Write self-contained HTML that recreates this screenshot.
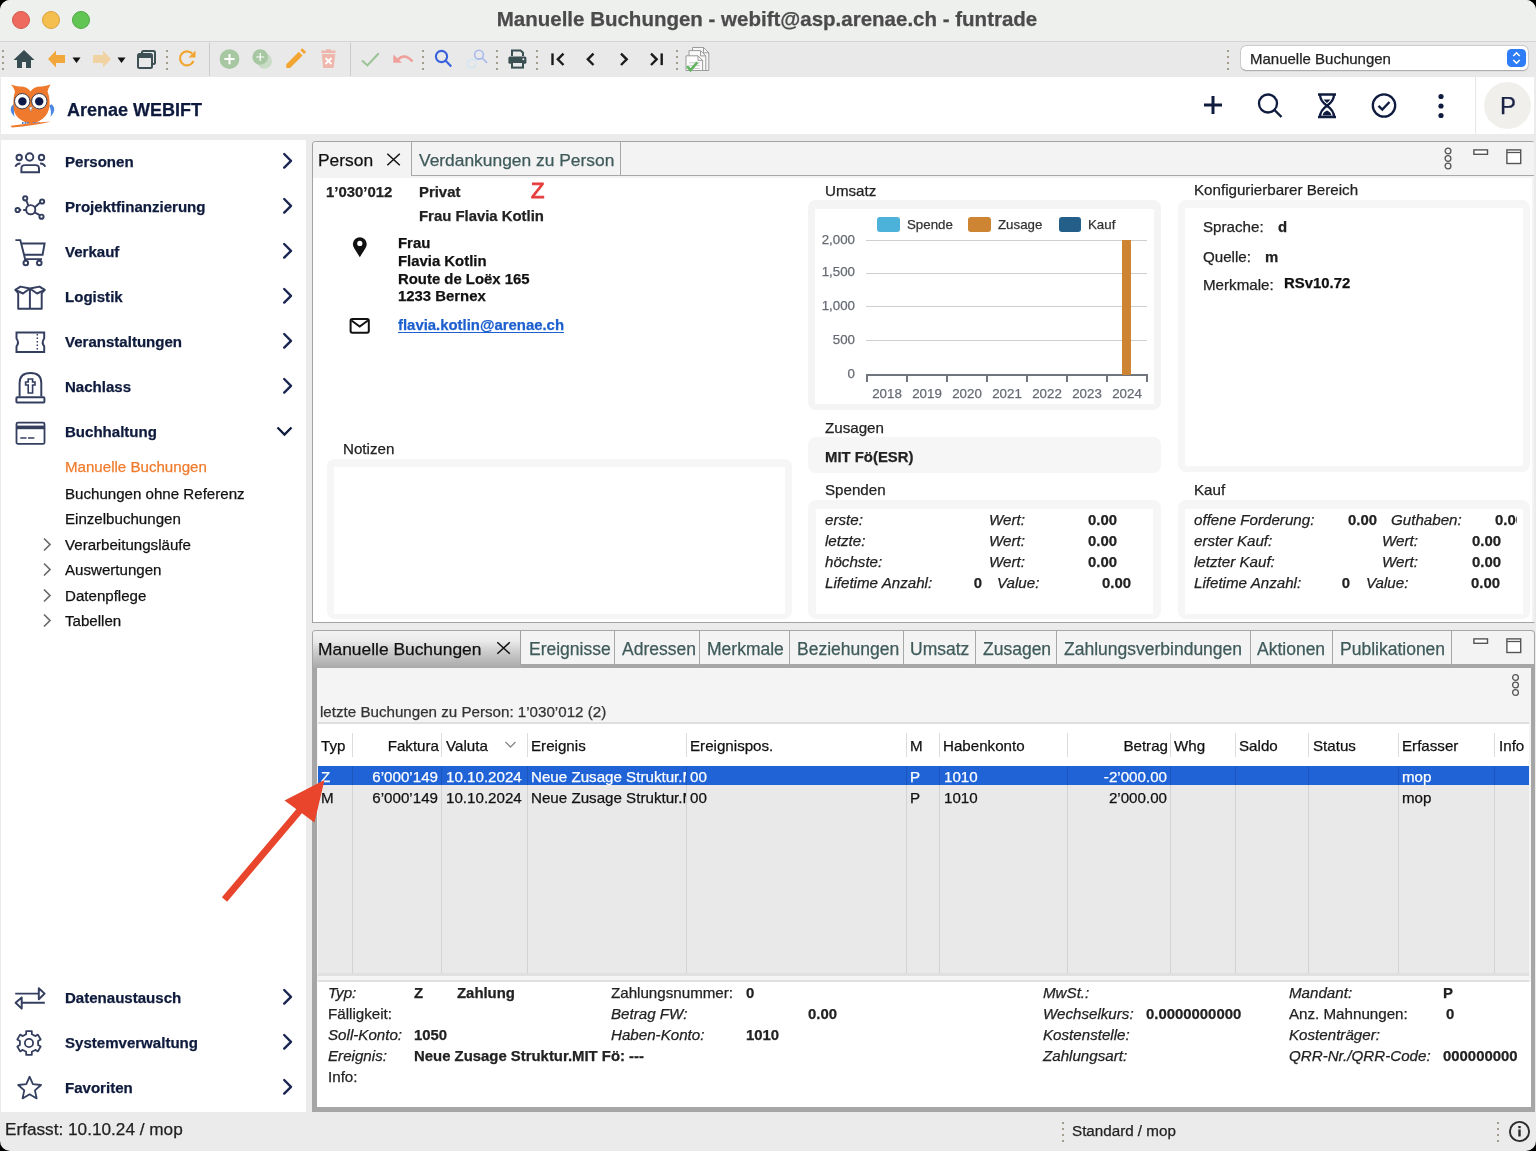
<!DOCTYPE html>
<html><head><meta charset="utf-8"><title>Manuelle Buchungen</title>
<style>
html,body{margin:0;padding:0;}
body{width:1536px;height:1151px;overflow:hidden;background:#000;position:relative;font-family:"Liberation Sans",sans-serif;}
.win{position:absolute;left:0;top:0;width:1536px;height:1151px;border-radius:10px;background:#ebebeb;overflow:hidden;}
.t{position:absolute;white-space:nowrap;line-height:1;-webkit-text-stroke:0.25px currentColor;will-change:transform;}
.r{position:absolute;}
</style></head><body><div class="win">

<div class="r" style="left:0px;top:0px;width:1536px;height:41px;background:#eef0ee;"></div>
<div class="r" style="left:0px;top:41px;width:1536px;height:1px;background:#d4d4d4;"></div>
<div class="r" style="left:12px;top:11px;width:18px;height:18px;background:#ee6a5e;border-radius:50%;box-sizing:border-box;border:0.6px solid #d5574b;"></div>
<div class="r" style="left:42px;top:11px;width:18px;height:18px;background:#f5bf4f;border-radius:50%;box-sizing:border-box;border:0.6px solid #d9a23c;"></div>
<div class="r" style="left:72px;top:11px;width:18px;height:18px;background:#61c554;border-radius:50%;box-sizing:border-box;border:0.6px solid #4fa842;"></div>
<div class="t" style="left:467.0px;width:600px;text-align:center;top:9.00px;font-size:20.5px;font-weight:700;color:#4b4b4b;">Manuelle Buchungen - webift@asp.arenae.ch - funtrade</div>
<div class="r" style="left:0px;top:42px;width:1536px;height:35px;background:#e9e9e9;"></div>
<div class="r" style="left:2px;top:50px;width:2px;height:2px;background:#a39d8c;"></div>
<div class="r" style="left:2px;top:56px;width:2px;height:2px;background:#a39d8c;"></div>
<div class="r" style="left:2px;top:62px;width:2px;height:2px;background:#a39d8c;"></div>
<div class="r" style="left:2px;top:68px;width:2px;height:2px;background:#a39d8c;"></div>
<svg class="r" style="left:13px;top:49px;" width="22" height="20" viewBox="0 0 22 20"><path d="M11 1 L21.5 11 L18 11 L18 19 L13 19 L13 13 L9 13 L9 19 L4 19 L4 11 L0.5 11 Z" fill="#384d51"/></svg>
<svg class="r" style="left:47px;top:50px;" width="20" height="18" viewBox="0 0 20 18"><path d="M1 9 L9 0.5 L9 5 L18 5 L18 13 L9 13 L9 17.5 Z" fill="#f2a73a"/></svg>
<svg class="r" style="left:72px;top:57px;" width="10" height="7" viewBox="0 0 10 7"><path d="M0.5 0.5 L8.5 0.5 L4.5 6 Z" fill="#111"/></svg>
<svg class="r" style="left:92px;top:50px;" width="20" height="18" viewBox="0 0 20 18"><path d="M19 9 L11 0.5 L11 5 L1 5 L1 13 L11 13 L11 17.5 Z" fill="#f1d2a2"/></svg>
<svg class="r" style="left:117px;top:57px;" width="10" height="7" viewBox="0 0 10 7"><path d="M0.5 0.5 L8.5 0.5 L4.5 6 Z" fill="#111"/></svg>
<svg class="r" style="left:136px;top:49px;" width="22" height="21" viewBox="0 0 22 21"><rect x="6" y="2" width="13" height="13" rx="1.5" fill="none" stroke="#3d5154" stroke-width="2"/><rect x="2" y="5" width="14" height="14" rx="1.5" fill="#e9e9e9" stroke="#3d5154" stroke-width="2"/><rect x="2" y="5" width="14" height="4" fill="#3d5154"/></svg>
<div class="r" style="left:166px;top:50px;width:2px;height:2px;background:#a39d8c;"></div>
<div class="r" style="left:166px;top:56px;width:2px;height:2px;background:#a39d8c;"></div>
<div class="r" style="left:166px;top:62px;width:2px;height:2px;background:#a39d8c;"></div>
<div class="r" style="left:166px;top:68px;width:2px;height:2px;background:#a39d8c;"></div>
<svg class="r" style="left:178px;top:49px;" width="20" height="20" viewBox="0 0 20 20"><path d="M15.5 12 A7 7 0 1 1 14.2 4.6" fill="none" stroke="#f2a531" stroke-width="2.2"/><path d="M17.5 1.5 L17.5 8.5 L10.5 8.5 Z" fill="#f2a531"/></svg>
<div class="r" style="left:209px;top:43px;width:1px;height:33px;background:#cbcbcb;"></div>
<svg class="r" style="left:219px;top:49px;" width="22" height="22" viewBox="0 0 22 22"><circle cx="10.5" cy="10.1" r="9.9" fill="#a7c7a2"/><path d="M10.5 5 V15.2 M5.4 10.1 H15.6" stroke="#fff" stroke-width="2"/></svg>
<svg class="r" style="left:250px;top:47px;" width="24" height="24" viewBox="0 0 24 24"><circle cx="14.4" cy="14.2" r="7.6" fill="#c9dcc6"/><circle cx="10.2" cy="10" r="7.8" fill="#a7c7a2"/><path d="M10.2 6 V14 M6.2 10 H14.2" stroke="#fff" stroke-width="1.2"/></svg>
<svg class="r" style="left:284px;top:48px;" width="24" height="22" viewBox="0 0 24 22"><path d="M2.3 20 L2.3 16.2 L14.8 3.7 L18.6 7.5 L6.1 20 Z" fill="#f2a531"/><path d="M16.3 2.2 L18.3 0.2 L22.1 4 L20.1 6 Z" fill="#f2a531"/></svg>
<svg class="r" style="left:320px;top:49px;" width="17" height="20" viewBox="0 0 17 20"><path d="M1.4 1.5 L15.5 1.5 L15.5 4 L1.4 4 Z" fill="#efb6ac"/><rect x="6" y="0.3" width="5" height="2" rx="0.8" fill="#efb6ac"/><path d="M1.8 5 L15.3 5 L13.6 19 L3.2 19 Z" fill="#efb6ac"/><path d="M5.5 9 L11.5 15 M11.5 9 L5.5 15" stroke="#fff" stroke-width="1.8"/></svg>
<div class="r" style="left:350px;top:43px;width:1px;height:33px;background:#cbcbcb;"></div>
<svg class="r" style="left:359px;top:50px;" width="22" height="18" viewBox="0 0 22 18"><path d="M3 10.4 L8.4 15.4 L19.8 3.3" fill="none" stroke="#98c393" stroke-width="2"/></svg>
<svg class="r" style="left:392px;top:52px;" width="24" height="14" viewBox="0 0 24 14"><path d="M6 7.5 Q12.5 0.5 20.5 9.5" fill="none" stroke="#efa09a" stroke-width="2.6"/><path d="M1.3 2.5 L1.3 10.8 L10 10.8 Z" fill="#efa09a"/></svg>
<div class="r" style="left:422px;top:50px;width:2px;height:2px;background:#a39d8c;"></div>
<div class="r" style="left:422px;top:56px;width:2px;height:2px;background:#a39d8c;"></div>
<div class="r" style="left:422px;top:62px;width:2px;height:2px;background:#a39d8c;"></div>
<div class="r" style="left:422px;top:68px;width:2px;height:2px;background:#a39d8c;"></div>
<svg class="r" style="left:434px;top:48px;" width="20" height="21" viewBox="0 0 20 21"><circle cx="7.5" cy="8.5" r="5.6" fill="none" stroke="#3a62dc" stroke-width="2.1"/><path d="M11.5 12.5 L17.2 18.4" stroke="#3a62dc" stroke-width="2.2"/></svg>
<svg class="r" style="left:465px;top:48px;" width="25" height="23" viewBox="0 0 25 23"><circle cx="14" cy="6.7" r="4.4" fill="none" stroke="#a9b9ea" stroke-width="1.6"/><path d="M17.2 10 L22 14.8" stroke="#a9b9ea" stroke-width="1.7"/><path d="M11 15.5 A4.3 4.3 0 1 1 9.5 12.3" fill="none" stroke="#d1e5f1" stroke-width="1.4"/><path d="M11.5 11 L11.5 14 L8.5 12.5 Z" fill="#d1e5f1"/></svg>
<div class="r" style="left:496px;top:50px;width:2px;height:2px;background:#a39d8c;"></div>
<div class="r" style="left:496px;top:56px;width:2px;height:2px;background:#a39d8c;"></div>
<div class="r" style="left:496px;top:62px;width:2px;height:2px;background:#a39d8c;"></div>
<div class="r" style="left:496px;top:68px;width:2px;height:2px;background:#a39d8c;"></div>
<svg class="r" style="left:507px;top:49px;" width="21" height="20" viewBox="0 0 21 20"><path d="M5 7 V1.4 H13.5 L16 3.8 V7" fill="none" stroke="#3a4f52" stroke-width="2"/><rect x="1.4" y="7.5" width="18" height="7.3" rx="1.6" fill="#3a4f52"/><rect x="5" y="13" width="11" height="5.6" fill="#e9e9e9" stroke="#3a4f52" stroke-width="2"/><circle cx="16.3" cy="10.3" r="1" fill="#e9e9e9"/></svg>
<div class="r" style="left:536px;top:50px;width:2px;height:2px;background:#a39d8c;"></div>
<div class="r" style="left:536px;top:56px;width:2px;height:2px;background:#a39d8c;"></div>
<div class="r" style="left:536px;top:62px;width:2px;height:2px;background:#a39d8c;"></div>
<div class="r" style="left:536px;top:68px;width:2px;height:2px;background:#a39d8c;"></div>
<svg class="r" style="left:549px;top:51px;" width="18" height="17" viewBox="0 0 18 17"><path d="M3.5 2.4 V14.1" stroke="#1b1b1b" stroke-width="2.4"/><path d="M14.5 2.6 L8.8 8.3 L14.5 14" fill="none" stroke="#1b1b1b" stroke-width="2.4"/></svg>
<svg class="r" style="left:584px;top:51px;" width="12" height="17" viewBox="0 0 12 17"><path d="M9.5 2.6 L3.8 8.3 L9.5 14" fill="none" stroke="#1b1b1b" stroke-width="2.4"/></svg>
<svg class="r" style="left:618px;top:51px;" width="12" height="17" viewBox="0 0 12 17"><path d="M3 2.6 L8.7 8.3 L3 14" fill="none" stroke="#1b1b1b" stroke-width="2.4"/></svg>
<svg class="r" style="left:648px;top:51px;" width="18" height="17" viewBox="0 0 18 17"><path d="M3 2.6 L8.7 8.3 L3 14" fill="none" stroke="#1b1b1b" stroke-width="2.4"/><path d="M13.7 2.4 V14.1" stroke="#1b1b1b" stroke-width="2.4"/></svg>
<div class="r" style="left:676px;top:50px;width:2px;height:2px;background:#a39d8c;"></div>
<div class="r" style="left:676px;top:56px;width:2px;height:2px;background:#a39d8c;"></div>
<div class="r" style="left:676px;top:62px;width:2px;height:2px;background:#a39d8c;"></div>
<div class="r" style="left:676px;top:68px;width:2px;height:2px;background:#a39d8c;"></div>
<svg class="r" style="left:680px;top:44px;" width="36" height="30" viewBox="0 0 36 30"><path d="M12.5 3.5 H23.5 L28.8 8.8 V26.5 H12.5 Z" fill="#f7f7f7" stroke="#9a9a9a" stroke-width="1"/><path d="M23.5 3.5 V8.8 H28.8" fill="none" stroke="#9a9a9a" stroke-width="1"/><path d="M9 6.6 H20.5 L25.8 11.9 V26.5 H9 Z" fill="#f9f9f9" stroke="#9a9a9a" stroke-width="1"/><path d="M20.5 6.6 V11.9 H25.8" fill="none" stroke="#9a9a9a" stroke-width="1"/><path d="M6 11.8 H18 L22.6 16.4 V26.5 H6 Z" fill="#fcfcfc" stroke="#9a9a9a" stroke-width="1"/><path d="M18 11.8 V16.4 H22.6" fill="none" stroke="#9a9a9a" stroke-width="1"/><path d="M9 18.8 H20 M9 21.6 H20 M9 24.4 H20" stroke="#c4c4c4" stroke-width="0.9"/><path d="M7 22.2 L10.5 26.2 L17.3 18.4" fill="none" stroke="#62b662" stroke-width="2.6"/></svg>
<div class="r" style="left:1227px;top:50px;width:2px;height:2px;background:#a39d8c;"></div>
<div class="r" style="left:1227px;top:56px;width:2px;height:2px;background:#a39d8c;"></div>
<div class="r" style="left:1227px;top:62px;width:2px;height:2px;background:#a39d8c;"></div>
<div class="r" style="left:1227px;top:68px;width:2px;height:2px;background:#a39d8c;"></div>
<div class="r" style="left:1241px;top:46px;width:287px;height:24px;background:#fff;border-radius:5px;box-shadow:0 0 0 0.5px rgba(0,0,0,0.18),0 0.5px 1.5px rgba(0,0,0,0.22);"></div>
<div class="t" style="left:1250.0px;top:51.00px;font-size:15.0px;font-weight:400;color:#222;">Manuelle Buchungen</div>
<svg class="r" style="left:1507px;top:49px;" width="19" height="18" viewBox="0 0 19 18"><rect x="0" y="0" width="19" height="18" rx="4.5" fill="#2e7cf6"/><path d="M6.3 7 L9.5 3.8 L12.7 7 M6.3 11 L9.5 14.2 L12.7 11" fill="none" stroke="#fff" stroke-width="1.6"/></svg>
<div class="r" style="left:1px;top:77px;width:1533px;height:57px;background:#fff;"></div>
<svg class="r" style="left:5px;top:80px;" width="55" height="52" viewBox="0 0 55 52"><path d="M8.2 24.2 Q2.5 29.5 9.5 37 Q8 30.5 11 25.5 Z" fill="#4c87e6"/><path d="M46.8 24.2 Q52.5 29.5 45.5 37 Q47 30.5 44 25.5 Z" fill="#4c87e6"/><path d="M6 4.5 Q10 6 14 6.5 Q22 6 25.5 11.5 Q29 6 37 6.5 Q41 6 45.5 4.5 Q43 9 42.5 11.5 Q45 17 44.5 26 Q44 33 38 38.5 Q31 43.5 26 44 Q21 43.5 14 38.5 Q8 33 8.5 26 Q8 17 10 11.5 Q9 8 6 4.5 Z" fill="#ef7a2e"/><circle cx="17.2" cy="21.2" r="7.7" fill="#fff" stroke="#2a2f45" stroke-width="0.9"/><circle cx="34.3" cy="21.2" r="7.7" fill="#fff" stroke="#2a2f45" stroke-width="0.9"/><circle cx="17.4" cy="21.4" r="4.2" fill="#0c1948"/><circle cx="34.2" cy="21.4" r="4.2" fill="#0c1948"/><path d="M24 27 L27.6 27 L25.8 31.5 Z" fill="#f4f4f4" stroke="#7a7f90" stroke-width="0.5"/><path d="M17 43 H24.5 M28 43 H36" stroke="#4c87e6" stroke-width="1.8" stroke-dasharray="1.6 1"/><path d="M5.5 45.8 Q20 43.5 46 41.5 Q30 45.5 7 47.5 Z" fill="#ef7a2e"/></svg>
<div class="t" style="left:67.0px;top:101.00px;font-size:18px;font-weight:700;color:#0e1a3c;">Arenae WEBIFT</div>
<svg class="r" style="left:1202px;top:94px;" width="22" height="22" viewBox="0 0 22 22"><path d="M11 2 V20 M2 11 H20" stroke="#101c3f" stroke-width="3"/></svg>
<svg class="r" style="left:1256px;top:92px;" width="28" height="28" viewBox="0 0 28 28"><circle cx="12" cy="11.5" r="9" fill="none" stroke="#101c3f" stroke-width="2.3"/><path d="M18.5 18 L25.5 25" stroke="#101c3f" stroke-width="2.4"/></svg>
<svg class="r" style="left:1315px;top:92px;" width="24" height="28" viewBox="0 0 24 28"><path d="M3 2.5 H21 M3 25 H21" stroke="#101c3f" stroke-width="2.6"/><path d="M5 2.5 Q5 9 12 13.75 Q19 9 19 2.5 M5 25 Q5 18.5 12 13.75 Q19 18.5 19 25" fill="none" stroke="#101c3f" stroke-width="2.3"/><path d="M8.5 7.5 H15.5 L12 11 Z M7.5 23.5 Q8 20 12 18.5 Q16 20 16.5 23.5 Z" fill="#101c3f"/></svg>
<svg class="r" style="left:1370px;top:91px;" width="28" height="29" viewBox="0 0 28 29"><circle cx="14" cy="14.5" r="11.2" fill="none" stroke="#101c3f" stroke-width="2.3"/><path d="M8.5 14.8 L12.3 18.5 L19.5 11" fill="none" stroke="#101c3f" stroke-width="2.4"/></svg>
<svg class="r" style="left:1435px;top:92px;" width="12" height="28" viewBox="0 0 12 28"><circle cx="6" cy="4.5" r="2.6" fill="#101c3f"/><circle cx="6" cy="14" r="2.6" fill="#101c3f"/><circle cx="6" cy="23.5" r="2.6" fill="#101c3f"/></svg>
<div class="r" style="left:1475px;top:77px;width:1px;height:57px;background:#e6e6e6;"></div>
<div class="r" style="left:1484px;top:82px;width:47px;height:47px;background:#f0efec;border-radius:50%;"></div>
<div class="t" style="left:1207.5px;width:600px;text-align:center;top:94.00px;font-size:24px;font-weight:400;color:#1a2346;">P</div>
<div class="r" style="left:1px;top:140px;width:305px;height:972px;background:#fff;"></div>
<svg class="r" style="left:10px;top:145px;" width="40" height="35" viewBox="0 0 40 35"><g fill="none" stroke="#343e5f" stroke-width="1.95"><circle cx="19.6" cy="12" r="3.7"/><circle cx="9.2" cy="12.5" r="2.7"/><circle cx="31.5" cy="12.5" r="2.7"/><path d="M11.4 27.2 V23.5 Q11.4 20.1 15 20.1 H25.4 Q29 20.1 29 23.5 V27.2 Z"/><path d="M5.4 21.7 Q6.5 18.5 10.5 18.5"/><path d="M35.2 21.7 Q34.1 18.5 30.1 18.5"/></g></svg>
<svg class="r" style="left:10px;top:190px;" width="40" height="35" viewBox="0 0 40 35"><g fill="none" stroke="#343e5f" stroke-width="1.95"><circle cx="20.7" cy="19.7" r="4.6"/><circle cx="15.2" cy="8.3" r="2.1"/><circle cx="32.1" cy="11.5" r="2.1"/><circle cx="31.5" cy="26.7" r="2.1"/><circle cx="7.6" cy="20" r="2.1"/><path d="M16.3 10.3 L18.3 15.5 M30.2 12.6 L24.8 17.3 M29.8 25.1 L24.5 22.4 M9.8 20 H11.2 M13.2 20 H16"/></g></svg>
<svg class="r" style="left:10px;top:235px;" width="40" height="35" viewBox="0 0 40 35"><g fill="none" stroke="#343e5f" stroke-width="1.95"><path d="M5.4 5.1 H10.3 L14.1 20 M11 8.4 H34.6 L32.6 19.8 H14.1 L15 24.1 H32"/><circle cx="15.8" cy="28" r="2.3"/><circle cx="29.3" cy="28" r="2.3"/></g></svg>
<svg class="r" style="left:10px;top:280px;" width="40" height="35" viewBox="0 0 40 35"><g fill="none" stroke="#343e5f" stroke-width="1.95" stroke-linejoin="round"><path d="M8.2 13 V28.8 L19.9 28.8 L31.7 28.8 V13"/><path d="M19.9 28.8 V8.5 M8.2 13 L5.3 9.8 L10.5 6.6 L19.9 8.5 L29.5 6.6 L34.8 9.8 L31.7 13 M5.3 9.8 L13 13.5 L19.9 8.5 L27 13.5 L34.8 9.8"/></g></svg>
<svg class="r" style="left:10px;top:325px;" width="40" height="35" viewBox="0 0 40 35"><g fill="none" stroke="#343e5f" stroke-width="1.95"><path d="M6.5 7.4 H34.2 V13.5 Q31.2 17.5 34.2 21.3 V26.9 H6.5 V21.3 Q9.5 17.5 6.5 13.5 Z"/></g><path d="M27.3 9 V25.5" stroke="#343e5f" stroke-width="1.5" stroke-dasharray="1.6 1.9"/></svg>
<svg class="r" style="left:10px;top:370px;" width="40" height="35" viewBox="0 0 40 35"><g fill="none" stroke="#343e5f" stroke-width="1.95"><path d="M9.6 26.6 V13 Q9.6 3 20.5 3 Q31.3 3 31.3 13 V26.6"/><rect x="6.4" y="27.3" width="28" height="5.2" rx="0.8"/><path d="M18.2 23 V15 H15.6 V12 H18.2 V9 H22.6 V12 H25 V15 H22.6 V23 Z" stroke-width="1.6"/></g></svg>
<svg class="r" style="left:10px;top:415px;" width="40" height="35" viewBox="0 0 40 35"><rect x="6.5" y="7.6" width="28" height="21.3" rx="1.5" fill="none" stroke="#343e5f" stroke-width="1.8"/><rect x="6.5" y="10.6" width="28" height="3.6" fill="#343e5f"/><path d="M10.3 23 H16.5 M18 23 H24.4" stroke="#343e5f" stroke-width="1.6"/></svg>
<svg class="r" style="left:10px;top:980px;" width="40" height="35" viewBox="0 0 40 35"><g fill="none" stroke="#343e5f" stroke-width="1.95" stroke-linejoin="round"><path d="M5.2 13.6 H28.5 M12 22.8 H34.8"/><path d="M28.8 8.2 L34.6 13.6 L28.8 19.2 Z M11.7 17.4 L5.6 22.8 L11.7 28.6 Z"/></g></svg>
<svg class="r" style="left:10px;top:1025px;" width="40" height="36" viewBox="0 0 40 36"><path d="M16.13 9.16 L16.21 6.12 L21.79 6.12 L21.87 9.16 L25.22 11.09 L27.89 9.65 L30.68 14.47 L28.10 16.07 L28.10 19.93 L30.68 21.53 L27.89 26.35 L25.22 24.91 L21.87 26.84 L21.79 29.88 L16.21 29.88 L16.13 26.84 L12.78 24.91 L10.11 26.35 L7.32 21.53 L9.90 19.93 L9.90 16.07 L7.32 14.47 L10.11 9.65 L12.78 11.09 Z" fill="none" stroke="#343e5f" stroke-width="1.8" stroke-linejoin="round"/><circle cx="19" cy="18" r="4.1" fill="none" stroke="#343e5f" stroke-width="1.8"/></svg>
<svg class="r" style="left:10px;top:1070px;" width="40" height="36" viewBox="0 0 40 36"><path d="M19.60 6.70 L22.89 14.17 L31.01 14.99 L24.93 20.43 L26.65 28.41 L19.60 24.30 L12.55 28.41 L14.27 20.43 L8.19 14.99 L16.31 14.17 Z" fill="none" stroke="#343e5f" stroke-width="1.8" stroke-linejoin="round"/></svg>
<div class="t" style="left:64.5px;top:154.00px;font-size:15.05px;font-weight:700;color:#0f1b3d;">Personen</div>
<svg class="r" style="left:280px;top:152.25px;" width="16" height="18" viewBox="0 0 16 18"><path d="M4.2 2 L11 8.8 L4.2 15.6" fill="none" stroke="#1b2652" stroke-width="2.4" stroke-linecap="round" stroke-linejoin="round"/></svg>
<div class="t" style="left:64.5px;top:199.00px;font-size:15.05px;font-weight:700;color:#0f1b3d;">Projektfinanzierung</div>
<svg class="r" style="left:280px;top:197.4px;" width="16" height="18" viewBox="0 0 16 18"><path d="M4.2 2 L11 8.8 L4.2 15.6" fill="none" stroke="#1b2652" stroke-width="2.4" stroke-linecap="round" stroke-linejoin="round"/></svg>
<div class="t" style="left:64.5px;top:244.00px;font-size:15.05px;font-weight:700;color:#0f1b3d;">Verkauf</div>
<svg class="r" style="left:280px;top:242.39999999999998px;" width="16" height="18" viewBox="0 0 16 18"><path d="M4.2 2 L11 8.8 L4.2 15.6" fill="none" stroke="#1b2652" stroke-width="2.4" stroke-linecap="round" stroke-linejoin="round"/></svg>
<div class="t" style="left:64.5px;top:289.00px;font-size:15.05px;font-weight:700;color:#0f1b3d;">Logistik</div>
<svg class="r" style="left:280px;top:287.4px;" width="16" height="18" viewBox="0 0 16 18"><path d="M4.2 2 L11 8.8 L4.2 15.6" fill="none" stroke="#1b2652" stroke-width="2.4" stroke-linecap="round" stroke-linejoin="round"/></svg>
<div class="t" style="left:64.5px;top:334.00px;font-size:15.05px;font-weight:700;color:#0f1b3d;">Veranstaltungen</div>
<svg class="r" style="left:280px;top:332.4px;" width="16" height="18" viewBox="0 0 16 18"><path d="M4.2 2 L11 8.8 L4.2 15.6" fill="none" stroke="#1b2652" stroke-width="2.4" stroke-linecap="round" stroke-linejoin="round"/></svg>
<div class="t" style="left:64.5px;top:379.00px;font-size:15.05px;font-weight:700;color:#0f1b3d;">Nachlass</div>
<svg class="r" style="left:280px;top:377.4px;" width="16" height="18" viewBox="0 0 16 18"><path d="M4.2 2 L11 8.8 L4.2 15.6" fill="none" stroke="#1b2652" stroke-width="2.4" stroke-linecap="round" stroke-linejoin="round"/></svg>
<div class="t" style="left:64.5px;top:424.00px;font-size:15.05px;font-weight:700;color:#0f1b3d;">Buchhaltung</div>
<svg class="r" style="left:275px;top:425px;" width="20" height="14" viewBox="0 0 20 14"><path d="M2.5 2.5 L9.5 9.5 L16.5 2.5" fill="none" stroke="#0f1b3d" stroke-width="2.3"/></svg>
<div class="t" style="left:64.5px;top:990.00px;font-size:15.05px;font-weight:700;color:#0f1b3d;">Datenaustausch</div>
<svg class="r" style="left:280px;top:988.1px;" width="16" height="18" viewBox="0 0 16 18"><path d="M4.2 2 L11 8.8 L4.2 15.6" fill="none" stroke="#1b2652" stroke-width="2.4" stroke-linecap="round" stroke-linejoin="round"/></svg>
<div class="t" style="left:64.5px;top:1035.00px;font-size:15.05px;font-weight:700;color:#0f1b3d;">Systemverwaltung</div>
<svg class="r" style="left:280px;top:1033px;" width="16" height="18" viewBox="0 0 16 18"><path d="M4.2 2 L11 8.8 L4.2 15.6" fill="none" stroke="#1b2652" stroke-width="2.4" stroke-linecap="round" stroke-linejoin="round"/></svg>
<div class="t" style="left:64.5px;top:1080.00px;font-size:15.05px;font-weight:700;color:#0f1b3d;">Favoriten</div>
<svg class="r" style="left:280px;top:1077.8px;" width="16" height="18" viewBox="0 0 16 18"><path d="M4.2 2 L11 8.8 L4.2 15.6" fill="none" stroke="#1b2652" stroke-width="2.4" stroke-linecap="round" stroke-linejoin="round"/></svg>
<div class="t" style="left:64.5px;top:459.00px;font-size:15.1px;font-weight:400;color:#f07b2c;">Manuelle Buchungen</div>
<div class="t" style="left:64.5px;top:486.00px;font-size:15.1px;font-weight:400;color:#111;">Buchungen ohne Referenz</div>
<div class="t" style="left:64.5px;top:511.00px;font-size:15.1px;font-weight:400;color:#111;">Einzelbuchungen</div>
<div class="t" style="left:64.5px;top:537.00px;font-size:15.1px;font-weight:400;color:#111;">Verarbeitungsläufe</div>
<svg class="r" style="left:40px;top:535.8px;" width="14" height="16" viewBox="0 0 14 16"><path d="M4 2.5 L10 8.5 L4 14.5" fill="none" stroke="#6a6a6a" stroke-width="1.7"/></svg>
<div class="t" style="left:64.5px;top:562.00px;font-size:15.1px;font-weight:400;color:#111;">Auswertungen</div>
<svg class="r" style="left:40px;top:561.4px;" width="14" height="16" viewBox="0 0 14 16"><path d="M4 2.5 L10 8.5 L4 14.5" fill="none" stroke="#6a6a6a" stroke-width="1.7"/></svg>
<div class="t" style="left:64.5px;top:588.00px;font-size:15.1px;font-weight:400;color:#111;">Datenpflege</div>
<svg class="r" style="left:40px;top:587px;" width="14" height="16" viewBox="0 0 14 16"><path d="M4 2.5 L10 8.5 L4 14.5" fill="none" stroke="#6a6a6a" stroke-width="1.7"/></svg>
<div class="t" style="left:64.5px;top:613.00px;font-size:15.1px;font-weight:400;color:#111;">Tabellen</div>
<svg class="r" style="left:40px;top:612.4px;" width="14" height="16" viewBox="0 0 14 16"><path d="M4 2.5 L10 8.5 L4 14.5" fill="none" stroke="#6a6a6a" stroke-width="1.7"/></svg>
<div class="r" style="left:312px;top:141px;width:1223px;height:482px;background:#fff;box-sizing:border-box;border:1px solid #a3a3a3;border-right-color:#ececec;border-radius:4px 4px 0 0;"></div>
<div class="r" style="left:313px;top:142px;width:1221px;height:36px;background:#f3f3f3;border-radius:3px 3px 0 0;"></div>
<div class="r" style="left:411px;top:175px;width:1123px;height:1px;background:#a8a8a8;"></div>
<div class="r" style="left:411px;top:142px;width:1px;height:34px;background:#a8a8a8;"></div>
<div class="r" style="left:620px;top:142px;width:1px;height:34px;background:#a8a8a8;"></div>
<div class="t" style="left:318.0px;top:152.00px;font-size:17.4px;font-weight:400;color:#111;">Person</div>
<svg class="r" style="left:384px;top:150px;" width="20" height="20" viewBox="0 0 20 20"><path d="M3.3 3.7 L15.8 15.2 M15.8 3.7 L3.3 15.2" stroke="#111" stroke-width="1.5"/></svg>
<div class="t" style="left:418.5px;top:152.00px;font-size:17.4px;font-weight:400;color:#3f5a5a;">Verdankungen zu Person</div>
<svg class="r" style="left:1442px;top:147px;" width="12" height="24" viewBox="0 0 12 24"><g fill="none" stroke="#555" stroke-width="1.3"><circle cx="6" cy="4" r="2.9"/><circle cx="6" cy="11.5" r="2.9"/><circle cx="6" cy="19" r="2.9"/></g></svg>
<svg class="r" style="left:1472px;top:148px;" width="18" height="10" viewBox="0 0 18 10"><rect x="1.9" y="1.9" width="13.6" height="4.4" fill="#fff" stroke="#555" stroke-width="1.4"/></svg>
<svg class="r" style="left:1505px;top:148px;" width="18" height="18" viewBox="0 0 18 18"><rect x="1.9" y="1.9" width="13.8" height="13.6" fill="#fff" stroke="#555" stroke-width="1.4"/><path d="M1.9 4.5 H15.7" stroke="#555" stroke-width="1.3"/></svg>
<div class="r" style="left:1532px;top:178px;width:2px;height:444px;background:#f3f3f3;"></div>
<div class="t" style="left:325.5px;top:185.00px;font-size:14.9px;font-weight:700;color:#222;">1’030’012</div>
<div class="t" style="left:418.5px;top:185.00px;font-size:14.9px;font-weight:700;color:#222;">Privat</div>
<div class="t" style="left:530.8px;top:180.00px;font-size:22px;font-weight:400;color:#e53d3d;-webkit-text-stroke:0.9px #e53d3d;">Z</div>
<div class="t" style="left:418.5px;top:209.00px;font-size:14.9px;font-weight:700;color:#222;">Frau Flavia Kotlin</div>
<svg class="r" style="left:350px;top:235px;" width="20" height="24" viewBox="0 0 20 24"><path d="M9.8 22.2 L4.2 13.2 A6.9 6.9 0 1 1 15.4 13.2 Z" fill="#111"/><circle cx="9.8" cy="8.4" r="2.6" fill="#fff"/></svg>
<div class="t" style="left:397.5px;top:236.00px;font-size:14.9px;font-weight:700;color:#111;">Frau</div>
<div class="t" style="left:397.5px;top:254.00px;font-size:14.9px;font-weight:700;color:#111;">Flavia Kotlin</div>
<div class="t" style="left:397.5px;top:272.00px;font-size:14.9px;font-weight:700;color:#111;">Route de Loëx 165</div>
<div class="t" style="left:397.5px;top:289.00px;font-size:14.9px;font-weight:700;color:#111;">1233 Bernex</div>
<svg class="r" style="left:348px;top:316px;" width="24" height="20" viewBox="0 0 24 20"><rect x="2.6" y="3" width="18.2" height="13.8" rx="1.8" fill="none" stroke="#111" stroke-width="2"/><path d="M3.5 4.5 L11.7 10.6 L19.9 4.5" fill="none" stroke="#111" stroke-width="1.9"/></svg>
<div class="t" style="left:397.5px;top:318.00px;font-size:14.9px;font-weight:700;color:#1d5fcf;text-decoration:underline;text-decoration-thickness:1.3px;text-underline-offset:2px;">flavia.kotlin@arenae.ch</div>
<div class="t" style="left:825.0px;top:183.00px;font-size:15.15px;font-weight:400;color:#222;">Umsatz</div>
<div class="r" style="left:808px;top:200px;width:353px;height:210px;background:#f4f4f4;border-radius:8px;"></div>
<div class="r" style="left:815.4px;top:209px;width:338.2px;height:194.6px;background:#fff;"></div>
<div class="t" style="left:254.5px;width:600px;text-align:right;top:233.00px;font-size:13.3px;font-weight:400;color:#666a73;">2,000</div>
<div class="r" style="left:866px;top:240px;width:281px;height:1px;background:#cfcfcf;"></div>
<div class="t" style="left:254.5px;width:600px;text-align:right;top:265.00px;font-size:13.3px;font-weight:400;color:#666a73;">1,500</div>
<div class="r" style="left:866px;top:273px;width:281px;height:1px;background:#cfcfcf;"></div>
<div class="t" style="left:254.5px;width:600px;text-align:right;top:299.00px;font-size:13.3px;font-weight:400;color:#666a73;">1,000</div>
<div class="r" style="left:866px;top:306px;width:281px;height:1px;background:#cfcfcf;"></div>
<div class="t" style="left:254.5px;width:600px;text-align:right;top:333.00px;font-size:13.3px;font-weight:400;color:#666a73;">500</div>
<div class="r" style="left:866px;top:340px;width:281px;height:1px;background:#cfcfcf;"></div>
<div class="t" style="left:254.5px;width:600px;text-align:right;top:367.00px;font-size:13.3px;font-weight:400;color:#666a73;">0</div>
<div class="r" style="left:866px;top:374px;width:282px;height:2px;background:#70747c;"></div>
<div class="r" style="left:866px;top:374px;width:2px;height:8px;background:#70747c;"></div>
<div class="r" style="left:906px;top:374px;width:2px;height:8px;background:#70747c;"></div>
<div class="r" style="left:946px;top:374px;width:2px;height:8px;background:#70747c;"></div>
<div class="r" style="left:986px;top:374px;width:2px;height:8px;background:#70747c;"></div>
<div class="r" style="left:1026px;top:374px;width:2px;height:8px;background:#70747c;"></div>
<div class="r" style="left:1066px;top:374px;width:2px;height:8px;background:#70747c;"></div>
<div class="r" style="left:1106px;top:374px;width:2px;height:8px;background:#70747c;"></div>
<div class="r" style="left:1146px;top:374px;width:2px;height:8px;background:#70747c;"></div>
<div class="t" style="left:587.0px;width:600px;text-align:center;top:387.00px;font-size:13.3px;font-weight:400;color:#666a73;">2018</div>
<div class="t" style="left:627.0px;width:600px;text-align:center;top:387.00px;font-size:13.3px;font-weight:400;color:#666a73;">2019</div>
<div class="t" style="left:667.0px;width:600px;text-align:center;top:387.00px;font-size:13.3px;font-weight:400;color:#666a73;">2020</div>
<div class="t" style="left:707.0px;width:600px;text-align:center;top:387.00px;font-size:13.3px;font-weight:400;color:#666a73;">2021</div>
<div class="t" style="left:747.0px;width:600px;text-align:center;top:387.00px;font-size:13.3px;font-weight:400;color:#666a73;">2022</div>
<div class="t" style="left:787.0px;width:600px;text-align:center;top:387.00px;font-size:13.3px;font-weight:400;color:#666a73;">2023</div>
<div class="t" style="left:827.0px;width:600px;text-align:center;top:387.00px;font-size:13.3px;font-weight:400;color:#666a73;">2024</div>
<div class="r" style="left:1122px;top:240px;width:9px;height:135px;background:#cd8533;"></div>
<div class="r" style="left:877px;top:217px;width:22.5px;height:15px;background:#4cb2d9;border-radius:3px;"></div>
<div class="t" style="left:906.5px;top:218.00px;font-size:13.3px;font-weight:400;color:#333;">Spende</div>
<div class="r" style="left:968px;top:217px;width:22.5px;height:15px;background:#cd8533;border-radius:3px;"></div>
<div class="t" style="left:997.5px;top:218.00px;font-size:13.3px;font-weight:400;color:#333;">Zusage</div>
<div class="r" style="left:1058.5px;top:217px;width:22.5px;height:15px;background:#235f88;border-radius:3px;"></div>
<div class="t" style="left:1088.0px;top:218.00px;font-size:13.3px;font-weight:400;color:#333;">Kauf</div>
<div class="t" style="left:825.0px;top:420.00px;font-size:15.15px;font-weight:400;color:#222;">Zusagen</div>
<div class="r" style="left:808px;top:437px;width:353px;height:36px;background:#f6f6f6;border-radius:8px;"></div>
<div class="t" style="left:825.0px;top:450.00px;font-size:14.9px;font-weight:700;color:#222;">MIT Fö(ESR)</div>
<div class="t" style="left:825.0px;top:482.00px;font-size:15.15px;font-weight:400;color:#222;">Spenden</div>
<div class="r" style="left:808px;top:500px;width:353px;height:119px;background:#f6f6f6;border-radius:8px;"></div>
<div class="r" style="left:816px;top:509px;width:337px;height:105px;background:#fff;"></div>
<div class="t" style="left:825.0px;top:512.00px;font-size:15.15px;font-weight:400;color:#222;font-style:italic;">erste:</div>
<div class="t" style="left:825.0px;top:533.00px;font-size:15.15px;font-weight:400;color:#222;font-style:italic;">letzte:</div>
<div class="t" style="left:825.0px;top:554.00px;font-size:15.15px;font-weight:400;color:#222;font-style:italic;">höchste:</div>
<div class="t" style="left:825.0px;top:575.00px;font-size:15.15px;font-weight:400;color:#222;font-style:italic;">Lifetime Anzahl:</div>
<div class="t" style="left:989.0px;top:512.00px;font-size:15.15px;font-weight:400;color:#222;font-style:italic;">Wert:</div>
<div class="t" style="left:517.0px;width:600px;text-align:right;top:513.00px;font-size:14.9px;font-weight:700;color:#222;">0.00</div>
<div class="t" style="left:989.0px;top:533.00px;font-size:15.15px;font-weight:400;color:#222;font-style:italic;">Wert:</div>
<div class="t" style="left:517.0px;width:600px;text-align:right;top:534.00px;font-size:14.9px;font-weight:700;color:#222;">0.00</div>
<div class="t" style="left:989.0px;top:554.00px;font-size:15.15px;font-weight:400;color:#222;font-style:italic;">Wert:</div>
<div class="t" style="left:517.0px;width:600px;text-align:right;top:555.00px;font-size:14.9px;font-weight:700;color:#222;">0.00</div>
<div class="t" style="left:382.0px;width:600px;text-align:right;top:576.00px;font-size:14.9px;font-weight:700;color:#222;">0</div>
<div class="t" style="left:996.5px;top:575.00px;font-size:15.15px;font-weight:400;color:#222;font-style:italic;">Value:</div>
<div class="t" style="left:531.0px;width:600px;text-align:right;top:576.00px;font-size:14.9px;font-weight:700;color:#222;">0.00</div>
<div class="t" style="left:343.0px;top:441.00px;font-size:15.15px;font-weight:400;color:#222;">Notizen</div>
<div class="r" style="left:327px;top:459px;width:465px;height:160px;background:#f6f6f6;border-radius:8px;"></div>
<div class="r" style="left:334px;top:467px;width:451px;height:147px;background:#fff;"></div>
<div class="t" style="left:1194.0px;top:182.00px;font-size:15.15px;font-weight:400;color:#222;">Konfigurierbarer Bereich</div>
<div class="r" style="left:1178px;top:200px;width:352px;height:272px;background:#f6f6f6;border-radius:8px;"></div>
<div class="r" style="left:1185px;top:208px;width:338px;height:258px;background:#fff;"></div>
<div class="t" style="left:1203.0px;top:219.00px;font-size:15.15px;font-weight:400;color:#222;">Sprache:</div>
<div class="t" style="left:1278.0px;top:220.00px;font-size:14.9px;font-weight:700;color:#222;">d</div>
<div class="t" style="left:1203.0px;top:249.00px;font-size:15.15px;font-weight:400;color:#222;">Quelle:</div>
<div class="t" style="left:1265.0px;top:250.00px;font-size:14.9px;font-weight:700;color:#222;">m</div>
<div class="t" style="left:1203.0px;top:277.00px;font-size:15.15px;font-weight:400;color:#222;">Merkmale:</div>
<div class="t" style="left:1284.0px;top:276.00px;font-size:14.9px;font-weight:700;color:#111;">RSv10.72</div>
<div class="t" style="left:1194.0px;top:482.00px;font-size:15.15px;font-weight:400;color:#222;">Kauf</div>
<div class="r" style="left:1178px;top:500px;width:352px;height:119px;background:#f6f6f6;border-radius:8px;"></div>
<div class="r" style="left:1185px;top:509px;width:338px;height:105px;background:#fff;overflow:hidden;"></div>
<div class="t" style="left:1194.0px;top:512.00px;font-size:15.15px;font-weight:400;color:#222;font-style:italic;">offene Forderung:</div>
<div class="t" style="left:1194.0px;top:533.00px;font-size:15.15px;font-weight:400;color:#222;font-style:italic;">erster Kauf:</div>
<div class="t" style="left:1194.0px;top:554.00px;font-size:15.15px;font-weight:400;color:#222;font-style:italic;">letzter Kauf:</div>
<div class="t" style="left:1194.0px;top:575.00px;font-size:15.15px;font-weight:400;color:#222;font-style:italic;">Lifetime Anzahl:</div>
<div class="t" style="left:776.5px;width:600px;text-align:right;top:513.00px;font-size:14.9px;font-weight:700;color:#222;">0.00</div>
<div class="t" style="left:1391.0px;top:512.00px;font-size:15.15px;font-weight:400;color:#222;font-style:italic;">Guthaben:</div>
<div class="r" style="left:1185px;top:509px;width:332px;height:30px;overflow:hidden;">
<div class="t" style="left:309.5px;top:3.69px;font-size:14.9px;font-weight:700;color:#222;">0.00</div>
</div>
<div class="t" style="left:1382.0px;top:533.00px;font-size:15.15px;font-weight:400;color:#222;font-style:italic;">Wert:</div>
<div class="t" style="left:901.0px;width:600px;text-align:right;top:534.00px;font-size:14.9px;font-weight:700;color:#222;">0.00</div>
<div class="t" style="left:1382.0px;top:554.00px;font-size:15.15px;font-weight:400;color:#222;font-style:italic;">Wert:</div>
<div class="t" style="left:901.0px;width:600px;text-align:right;top:555.00px;font-size:14.9px;font-weight:700;color:#222;">0.00</div>
<div class="t" style="left:750.0px;width:600px;text-align:right;top:576.00px;font-size:14.9px;font-weight:700;color:#222;">0</div>
<div class="t" style="left:1366.0px;top:575.00px;font-size:15.15px;font-weight:400;color:#222;font-style:italic;">Value:</div>
<div class="t" style="left:900.0px;width:600px;text-align:right;top:576.00px;font-size:14.9px;font-weight:700;color:#222;">0.00</div>
<div class="r" style="left:312px;top:630px;width:1223px;height:482px;background:#a6a6a6;border-radius:4px 4px 0 0;"></div>
<div class="r" style="left:313px;top:631px;width:1221px;height:33px;background:#f3f3f3;border-radius:3px 3px 0 0;"></div>
<div class="r" style="left:313px;top:631px;width:208px;height:37px;background:linear-gradient(#f3f3f3 0%,#ececec 25%,#c9c9c9 60%,#a9a9a9 100%);border-radius:3px 0 0 0;"></div>
<div class="r" style="left:520px;top:631px;width:1px;height:34px;background:#a0a0a0;"></div>
<div class="r" style="left:614px;top:631px;width:1px;height:34px;background:#a8a8a8;"></div>
<div class="r" style="left:699px;top:631px;width:1px;height:34px;background:#a8a8a8;"></div>
<div class="r" style="left:789px;top:631px;width:1px;height:34px;background:#a8a8a8;"></div>
<div class="r" style="left:903px;top:631px;width:1px;height:34px;background:#a8a8a8;"></div>
<div class="r" style="left:975px;top:631px;width:1px;height:34px;background:#a8a8a8;"></div>
<div class="r" style="left:1056px;top:631px;width:1px;height:34px;background:#a8a8a8;"></div>
<div class="r" style="left:1250px;top:631px;width:1px;height:34px;background:#a8a8a8;"></div>
<div class="r" style="left:1332px;top:631px;width:1px;height:34px;background:#a8a8a8;"></div>
<div class="r" style="left:1451px;top:631px;width:1px;height:34px;background:#a8a8a8;"></div>
<div class="t" style="left:318.0px;top:641.00px;font-size:17.4px;font-weight:400;color:#111;">Manuelle Buchungen</div>
<svg class="r" style="left:494px;top:639px;" width="20" height="20" viewBox="0 0 20 20"><path d="M3.3 3.3 L15.8 14.8 M15.8 3.3 L3.3 14.8" stroke="#111" stroke-width="1.5"/></svg>
<div class="t" style="left:528.5px;top:641.00px;font-size:17.5px;font-weight:400;color:#3f5a5a;">Ereignisse</div>
<div class="t" style="left:621.5px;top:641.00px;font-size:17.5px;font-weight:400;color:#3f5a5a;">Adressen</div>
<div class="t" style="left:706.5px;top:641.00px;font-size:17.5px;font-weight:400;color:#3f5a5a;">Merkmale</div>
<div class="t" style="left:797.0px;top:641.00px;font-size:17.5px;font-weight:400;color:#3f5a5a;">Beziehungen</div>
<div class="t" style="left:910.0px;top:641.00px;font-size:17.5px;font-weight:400;color:#3f5a5a;">Umsatz</div>
<div class="t" style="left:982.5px;top:641.00px;font-size:17.5px;font-weight:400;color:#3f5a5a;">Zusagen</div>
<div class="t" style="left:1064.0px;top:641.00px;font-size:17.5px;font-weight:400;color:#3f5a5a;">Zahlungsverbindungen</div>
<div class="t" style="left:1257.0px;top:641.00px;font-size:17.5px;font-weight:400;color:#3f5a5a;">Aktionen</div>
<div class="t" style="left:1339.5px;top:641.00px;font-size:17.5px;font-weight:400;color:#3f5a5a;">Publikationen</div>
<svg class="r" style="left:1472px;top:637px;" width="18" height="10" viewBox="0 0 18 10"><rect x="1.9" y="1.9" width="13.6" height="4.4" fill="#fff" stroke="#555" stroke-width="1.4"/></svg>
<svg class="r" style="left:1505px;top:637px;" width="18" height="18" viewBox="0 0 18 18"><rect x="1.9" y="1.9" width="13.8" height="13.6" fill="#fff" stroke="#555" stroke-width="1.4"/><path d="M1.9 4.5 H15.7" stroke="#555" stroke-width="1.3"/></svg>
<div class="r" style="left:317px;top:668px;width:1214px;height:439px;background:#f4f4f4;"></div>
<svg class="r" style="left:1509px;top:671px;" width="14" height="26" viewBox="0 0 14 26"><g fill="none" stroke="#555" stroke-width="1.3"><circle cx="6.5" cy="6.5" r="2.9"/><circle cx="6.5" cy="14" r="2.9"/><circle cx="6.5" cy="21.5" r="2.9"/></g></svg>
<div class="t" style="left:319.5px;top:704.00px;font-size:15.15px;font-weight:400;color:#333;">letzte Buchungen zu Person: 1’030’012 (2)</div>
<div class="r" style="left:318px;top:722px;width:1211px;height:2px;background:#dedede;"></div>
<div class="r" style="left:318px;top:724px;width:1211px;height:42px;background:#fff;"></div>
<div class="r" style="left:318px;top:766px;width:1211px;height:207px;background:#e9e9e9;"></div>
<div class="r" style="left:352px;top:733px;width:1px;height:24px;background:#dcdcdc;"></div>
<div class="r" style="left:352px;top:766px;width:1px;height:207px;background:#d3d3d3;"></div>
<div class="r" style="left:441px;top:733px;width:1px;height:24px;background:#dcdcdc;"></div>
<div class="r" style="left:441px;top:766px;width:1px;height:207px;background:#d3d3d3;"></div>
<div class="r" style="left:527px;top:733px;width:1px;height:24px;background:#dcdcdc;"></div>
<div class="r" style="left:527px;top:766px;width:1px;height:207px;background:#d3d3d3;"></div>
<div class="r" style="left:686px;top:733px;width:1px;height:24px;background:#dcdcdc;"></div>
<div class="r" style="left:686px;top:766px;width:1px;height:207px;background:#d3d3d3;"></div>
<div class="r" style="left:906px;top:733px;width:1px;height:24px;background:#dcdcdc;"></div>
<div class="r" style="left:906px;top:766px;width:1px;height:207px;background:#d3d3d3;"></div>
<div class="r" style="left:939px;top:733px;width:1px;height:24px;background:#dcdcdc;"></div>
<div class="r" style="left:939px;top:766px;width:1px;height:207px;background:#d3d3d3;"></div>
<div class="r" style="left:1067px;top:733px;width:1px;height:24px;background:#dcdcdc;"></div>
<div class="r" style="left:1067px;top:766px;width:1px;height:207px;background:#d3d3d3;"></div>
<div class="r" style="left:1170px;top:733px;width:1px;height:24px;background:#dcdcdc;"></div>
<div class="r" style="left:1170px;top:766px;width:1px;height:207px;background:#d3d3d3;"></div>
<div class="r" style="left:1235px;top:733px;width:1px;height:24px;background:#dcdcdc;"></div>
<div class="r" style="left:1235px;top:766px;width:1px;height:207px;background:#d3d3d3;"></div>
<div class="r" style="left:1308px;top:733px;width:1px;height:24px;background:#dcdcdc;"></div>
<div class="r" style="left:1308px;top:766px;width:1px;height:207px;background:#d3d3d3;"></div>
<div class="r" style="left:1398px;top:733px;width:1px;height:24px;background:#dcdcdc;"></div>
<div class="r" style="left:1398px;top:766px;width:1px;height:207px;background:#d3d3d3;"></div>
<div class="r" style="left:1494px;top:733px;width:1px;height:24px;background:#dcdcdc;"></div>
<div class="r" style="left:1494px;top:766px;width:1px;height:207px;background:#d3d3d3;"></div>
<div class="t" style="left:321.0px;top:738.00px;font-size:15.15px;font-weight:400;color:#111;">Typ</div>
<div class="t" style="left:-161.5px;width:600px;text-align:right;top:738.00px;font-size:15.15px;font-weight:400;color:#111;">Faktura</div>
<div class="t" style="left:445.5px;top:738.00px;font-size:15.15px;font-weight:400;color:#111;">Valuta</div>
<svg class="r" style="left:504px;top:740px;" width="14" height="10" viewBox="0 0 14 10"><path d="M1.5 2 L6.5 7 L11.5 2" fill="none" stroke="#888" stroke-width="1.3"/></svg>
<div class="t" style="left:531.0px;top:738.00px;font-size:15.15px;font-weight:400;color:#111;">Ereignis</div>
<div class="t" style="left:689.5px;top:738.00px;font-size:15.15px;font-weight:400;color:#111;">Ereignispos.</div>
<div class="t" style="left:910.0px;top:738.00px;font-size:15.15px;font-weight:400;color:#111;">M</div>
<div class="t" style="left:943.0px;top:738.00px;font-size:15.15px;font-weight:400;color:#111;">Habenkonto</div>
<div class="t" style="left:567.5px;width:600px;text-align:right;top:738.00px;font-size:15.15px;font-weight:400;color:#111;">Betrag</div>
<div class="t" style="left:1174.0px;top:738.00px;font-size:15.15px;font-weight:400;color:#111;">Whg</div>
<div class="t" style="left:1238.5px;top:738.00px;font-size:15.15px;font-weight:400;color:#111;">Saldo</div>
<div class="t" style="left:1312.5px;top:738.00px;font-size:15.15px;font-weight:400;color:#111;">Status</div>
<div class="t" style="left:1402.0px;top:738.00px;font-size:15.15px;font-weight:400;color:#111;">Erfasser</div>
<div class="t" style="left:1498.5px;top:738.00px;font-size:15.15px;font-weight:400;color:#111;">Info</div>
<div class="r" style="left:318px;top:766px;width:1211px;height:19px;background:#1f63d7;"></div>
<div class="r" style="left:352px;top:766px;width:1px;height:19px;background:#1b56bd;"></div>
<div class="r" style="left:441px;top:766px;width:1px;height:19px;background:#1b56bd;"></div>
<div class="r" style="left:527px;top:766px;width:1px;height:19px;background:#1b56bd;"></div>
<div class="r" style="left:686px;top:766px;width:1px;height:19px;background:#1b56bd;"></div>
<div class="r" style="left:906px;top:766px;width:1px;height:19px;background:#1b56bd;"></div>
<div class="r" style="left:939px;top:766px;width:1px;height:19px;background:#1b56bd;"></div>
<div class="r" style="left:1067px;top:766px;width:1px;height:19px;background:#1b56bd;"></div>
<div class="r" style="left:1170px;top:766px;width:1px;height:19px;background:#1b56bd;"></div>
<div class="r" style="left:1235px;top:766px;width:1px;height:19px;background:#1b56bd;"></div>
<div class="r" style="left:1308px;top:766px;width:1px;height:19px;background:#1b56bd;"></div>
<div class="r" style="left:1398px;top:766px;width:1px;height:19px;background:#1b56bd;"></div>
<div class="r" style="left:1494px;top:766px;width:1px;height:19px;background:#1b56bd;"></div>
<div class="t" style="left:320.5px;top:769.00px;font-size:15.15px;font-weight:400;color:#fff;">Z</div>
<div class="t" style="left:-162.0px;width:600px;text-align:right;top:769.00px;font-size:15.15px;font-weight:400;color:#fff;">6’000’149</div>
<div class="t" style="left:445.5px;top:769.00px;font-size:15.15px;font-weight:400;color:#fff;">10.10.2024</div>
<div class="r" style="left:528px;top:764px;width:158px;height:22px;overflow:hidden;"><div class="t" style="left:3px;top:5px;font-size:15.15px;color:#fff;">Neue Zusage Struktur.MIT</div></div>
<div class="t" style="left:689.5px;top:769.00px;font-size:15.15px;font-weight:400;color:#fff;">00</div>
<div class="t" style="left:910.0px;top:769.00px;font-size:15.15px;font-weight:400;color:#fff;">P</div>
<div class="t" style="left:943.5px;top:769.00px;font-size:15.15px;font-weight:400;color:#fff;">1010</div>
<div class="t" style="left:567.0px;width:600px;text-align:right;top:769.00px;font-size:15.15px;font-weight:400;color:#fff;">-2’000.00</div>
<div class="t" style="left:1402.0px;top:769.00px;font-size:15.15px;font-weight:400;color:#fff;">mop</div>
<div class="t" style="left:320.5px;top:790.00px;font-size:15.15px;font-weight:400;color:#111;">M</div>
<div class="t" style="left:-162.0px;width:600px;text-align:right;top:790.00px;font-size:15.15px;font-weight:400;color:#111;">6’000’149</div>
<div class="t" style="left:445.5px;top:790.00px;font-size:15.15px;font-weight:400;color:#111;">10.10.2024</div>
<div class="r" style="left:528px;top:785px;width:158px;height:22px;overflow:hidden;"><div class="t" style="left:3px;top:5px;font-size:15.15px;color:#111;">Neue Zusage Struktur.MIT</div></div>
<div class="t" style="left:689.5px;top:790.00px;font-size:15.15px;font-weight:400;color:#111;">00</div>
<div class="t" style="left:910.0px;top:790.00px;font-size:15.15px;font-weight:400;color:#111;">P</div>
<div class="t" style="left:943.5px;top:790.00px;font-size:15.15px;font-weight:400;color:#111;">1010</div>
<div class="t" style="left:567.0px;width:600px;text-align:right;top:790.00px;font-size:15.15px;font-weight:400;color:#111;">2’000.00</div>
<div class="t" style="left:1402.0px;top:790.00px;font-size:15.15px;font-weight:400;color:#111;">mop</div>
<div class="r" style="left:318px;top:973px;width:1211px;height:3px;background:#e0e0e0;"></div>
<div class="r" style="left:318px;top:976px;width:1211px;height:4px;background:#f4f4f4;"></div>
<div class="r" style="left:318px;top:980px;width:1211px;height:2px;background:#e0e0e0;"></div>
<div class="r" style="left:317px;top:982px;width:1214px;height:125px;background:#fff;"></div>
<div class="t" style="left:327.5px;top:985.00px;font-size:15.15px;font-weight:400;color:#222;font-style:italic;">Typ:</div>
<div class="t" style="left:414.0px;top:986.00px;font-size:14.9px;font-weight:700;color:#222;">Z</div>
<div class="t" style="left:457.0px;top:986.00px;font-size:14.9px;font-weight:700;color:#222;">Zahlung</div>
<div class="t" style="left:327.5px;top:1006.00px;font-size:15.15px;font-weight:400;color:#222;">Fälligkeit:</div>
<div class="t" style="left:327.5px;top:1027.00px;font-size:15.15px;font-weight:400;color:#222;font-style:italic;">Soll-Konto:</div>
<div class="t" style="left:414.0px;top:1028.00px;font-size:14.9px;font-weight:700;color:#222;">1050</div>
<div class="t" style="left:327.5px;top:1048.00px;font-size:15.15px;font-weight:400;color:#222;font-style:italic;">Ereignis:</div>
<div class="t" style="left:414.0px;top:1049.00px;font-size:14.9px;font-weight:700;color:#222;">Neue Zusage Struktur.MIT Fö: ---</div>
<div class="t" style="left:327.5px;top:1069.00px;font-size:15.15px;font-weight:400;color:#222;">Info:</div>
<div class="t" style="left:610.5px;top:985.00px;font-size:15.15px;font-weight:400;color:#222;">Zahlungsnummer:</div>
<div class="t" style="left:745.5px;top:986.00px;font-size:14.9px;font-weight:700;color:#222;">0</div>
<div class="t" style="left:610.5px;top:1006.00px;font-size:15.15px;font-weight:400;color:#222;font-style:italic;">Betrag FW:</div>
<div class="t" style="left:236.5px;width:600px;text-align:right;top:1007.00px;font-size:14.9px;font-weight:700;color:#222;">0.00</div>
<div class="t" style="left:610.5px;top:1027.00px;font-size:15.15px;font-weight:400;color:#222;font-style:italic;">Haben-Konto:</div>
<div class="t" style="left:745.5px;top:1028.00px;font-size:14.9px;font-weight:700;color:#222;">1010</div>
<div class="t" style="left:1042.5px;top:985.00px;font-size:15.15px;font-weight:400;color:#222;font-style:italic;">MwSt.:</div>
<div class="t" style="left:1042.5px;top:1006.00px;font-size:15.15px;font-weight:400;color:#222;font-style:italic;">Wechselkurs:</div>
<div class="t" style="left:1146.0px;top:1007.00px;font-size:14.9px;font-weight:700;color:#222;">0.0000000000</div>
<div class="t" style="left:1042.5px;top:1027.00px;font-size:15.15px;font-weight:400;color:#222;font-style:italic;">Kostenstelle:</div>
<div class="t" style="left:1042.5px;top:1048.00px;font-size:15.15px;font-weight:400;color:#222;font-style:italic;">Zahlungsart:</div>
<div class="t" style="left:1288.5px;top:985.00px;font-size:15.15px;font-weight:400;color:#222;font-style:italic;">Mandant:</div>
<div class="t" style="left:1443.0px;top:986.00px;font-size:14.9px;font-weight:700;color:#222;">P</div>
<div class="t" style="left:1288.5px;top:1006.00px;font-size:15.15px;font-weight:400;color:#222;">Anz. Mahnungen:</div>
<div class="t" style="left:1446.0px;top:1007.00px;font-size:14.9px;font-weight:700;color:#222;">0</div>
<div class="t" style="left:1288.5px;top:1027.00px;font-size:15.15px;font-weight:400;color:#222;font-style:italic;">Kostenträger:</div>
<div class="t" style="left:1288.5px;top:1048.00px;font-size:15.15px;font-weight:400;color:#222;font-style:italic;">QRR-Nr./QRR-Code:</div>
<div class="t" style="left:1443.0px;top:1049.00px;font-size:14.9px;font-weight:700;color:#222;">000000000</div>
<div class="t" style="left:5.0px;top:1121.00px;font-size:17.2px;font-weight:400;color:#222;">Erfasst: 10.10.24 / mop</div>
<div class="r" style="left:1062px;top:1122px;width:2px;height:2px;background:#a39d8c;"></div>
<div class="r" style="left:1062px;top:1128px;width:2px;height:2px;background:#a39d8c;"></div>
<div class="r" style="left:1062px;top:1134px;width:2px;height:2px;background:#a39d8c;"></div>
<div class="r" style="left:1062px;top:1140px;width:2px;height:2px;background:#a39d8c;"></div>
<div class="t" style="left:1072.0px;top:1123.00px;font-size:15.2px;font-weight:400;color:#222;">Standard / mop</div>
<div class="r" style="left:1497px;top:1122px;width:2px;height:2px;background:#a39d8c;"></div>
<div class="r" style="left:1497px;top:1128px;width:2px;height:2px;background:#a39d8c;"></div>
<div class="r" style="left:1497px;top:1134px;width:2px;height:2px;background:#a39d8c;"></div>
<div class="r" style="left:1497px;top:1140px;width:2px;height:2px;background:#a39d8c;"></div>
<svg class="r" style="left:1508px;top:1120px;" width="23" height="23" viewBox="0 0 23 23"><circle cx="11.5" cy="11.5" r="9.6" fill="none" stroke="#2a2a2a" stroke-width="1.9"/><rect x="10.3" y="9.5" width="2.4" height="7" fill="#2a2a2a"/><rect x="10.3" y="6" width="2.4" height="2.2" fill="#2a2a2a"/></svg>
<svg class="r" style="left:215px;top:775px;" width="115" height="135" viewBox="0 0 115 135"><path d="M9.5 124.5 L86 34" stroke="#e8452c" stroke-width="6.8"/><path d="M109.5 5 L69.5 25.5 L99.5 47.5 Z" fill="#e8452c"/></svg>
</div></body></html>
